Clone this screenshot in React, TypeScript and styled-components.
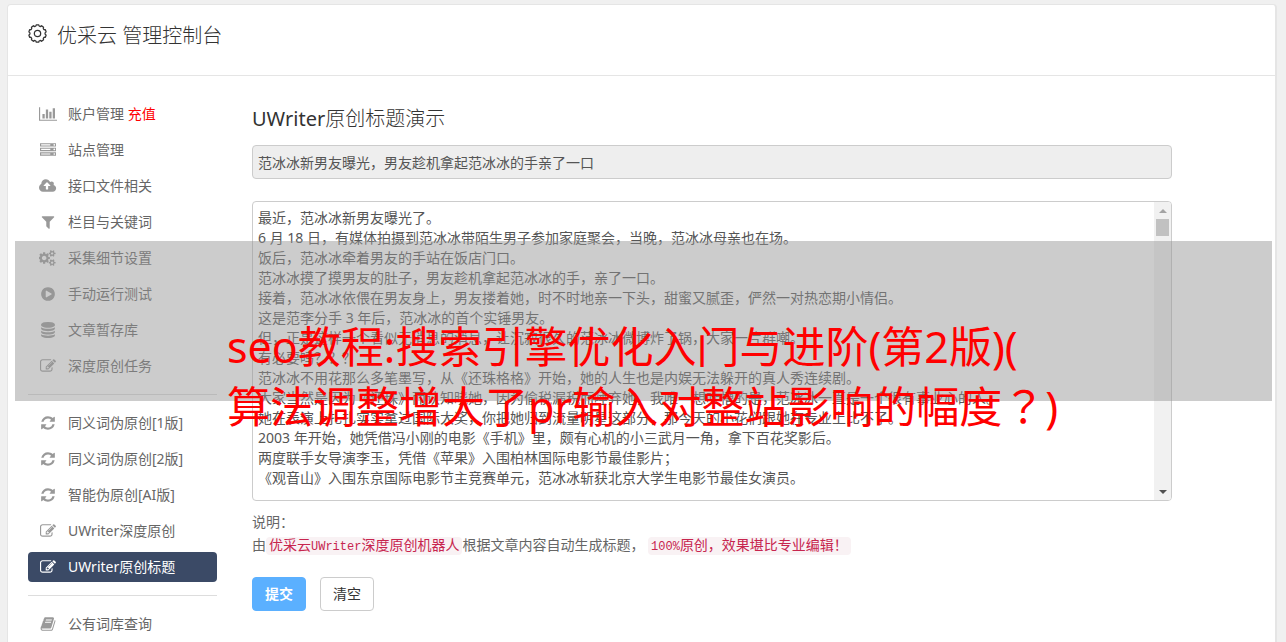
import React from 'react';
import styled, { createGlobalStyle, css } from 'styled-components';

const GlobalStyle = createGlobalStyle`
  *, *::before, *::after { box-sizing: border-box; }
  html { background: #f0f0f0; }
  body {
    margin: 0;
    color: #555;
    font-family: "Noto Sans", "Noto Sans CJK SC", sans-serif;
    font-size: 14px;
    line-height: 20px;
  }
  button, input, textarea { font: inherit; }
  #root { display: flow-root; height: 100vh; overflow: hidden; }
`;

const Panel = styled.div`
  min-height: calc(100vh - 4px);
  margin: 4px 9px 0 7px;
  background: #fff;
  border: 1px solid #e5e5e5;
  border-right-width: 2px;
  border-bottom: 0;
  border-radius: 4px 4px 0 0;
`;

const Header = styled.header`
  display: flex;
  align-items: flex-start;
  gap: 10px;
  height: 71px;
  padding: 19px 20px 0;
  border-bottom: 1px solid #e5e5e5;
  color: #333;
`;

const PageTitle = styled.h1`
  margin: 0;
  font-size: 20px;
  line-height: 24px;
  font-weight: 300;
`;

const Columns = styled.div`
  display: flex;
  gap: 35px;
  padding: 23px 20px 0;
`;

const Sidebar = styled.nav`
  display: flex;
  flex: 0 0 189px;
  flex-direction: column;
  gap: 6px;
`;

const MenuLink = styled.a<{ $active?: boolean }>`
  display: flex;
  align-items: center;
  gap: 10px;
  height: 30px;
  padding: 0 10px;
  border-radius: 4px;
  color: #666;
  text-decoration: none;
  white-space: nowrap;
  svg { color: #999; }
  ${({ $active }) => $active && css`
    background: #3b4a66;
    color: #fff;
    svg { color: #fff; }
  `}
`;

const IconSlot = styled.span`
  display: flex;
  justify-content: center;
  width: 20px;
`;

const Recharge = styled.span`
  color: #f00;
`;

const Divider = styled.hr`
  width: 100%;
  height: 1px;
  margin: 7px 0;
  border: 0;
  background: #ddd;
`;

const Form = styled.form`
  display: flex;
  flex: 0 1 920px;
  flex-direction: column;
  min-width: 0;
`;

const FormTitle = styled.h2`
  margin: 6px 0 12px;
  color: #333;
  font-size: 20px;
  line-height: 28px;
  font-weight: 300;
`;

const TitleLatin = styled.span`
  font-weight: 400;
`;

const TitleInput = styled.input`
  width: 100%;
  height: 34px;
  padding: 6px 5px;
  background: #eee;
  border: 1px solid #ccc;
  border-radius: 4px;
  color: #555;
  outline: 0;
`;

const ArticleFrame = styled.div`
  display: flex;
  height: 300px;
  margin: 22px 0 9px;
  overflow: hidden;
  border: 1px solid #ccc;
  border-radius: 4px;
`;

const ArticleText = styled.textarea`
  flex: 1;
  min-width: 0;
  padding: 6px 5px;
  overflow: hidden;
  background: transparent;
  border: 0;
  color: #555;
  outline: 0;
  resize: none;
`;

const ScrollTrack = styled.div`
  display: flex;
  flex: 0 0 17px;
  flex-direction: column;
  align-items: center;
  background: #f1f1f1;
`;

const ScrollArrow = styled.span<{ $down?: boolean }>`
  display: grid;
  place-items: center;
  width: 17px;
  height: 17px;
  margin-top: ${({ $down }) => ($down ? 'auto' : '0')};
  &::before {
    content: "";
    border: 4px solid transparent;
    border-top: ${({ $down }) => ($down ? '4px solid #505050' : '0')};
    border-bottom: ${({ $down }) => ($down ? '0' : '4px solid #a3a3a3')};
  }
`;

const ScrollThumb = styled.span`
  width: 13px;
  height: 17px;
  background: #c1c1c1;
`;

const Note = styled.p`
  margin: 0;
  line-height: 23px;
  color: #666;
`;

const Code = styled.code`
  padding: 1px 3px;
  background: #f9f2f4;
  border-radius: 4px;
  color: #c7254e;
  font-family: "Liberation Mono", "Noto Sans CJK SC", monospace;
  font-size: 14px;
`;

const CodeLatin = styled.span`
  font-size: 12px;
`;

const Actions = styled.div`
  display: flex;
  gap: 14px;
  margin-top: 18px;
`;

const Button = styled.button<{ $primary?: boolean }>`
  width: 54px;
  height: 34px;
  padding: 0;
  background: ${({ $primary }) => ($primary ? '#5bb0ff' : '#fff')};
  border: 1px solid ${({ $primary }) => ($primary ? '#5bb0ff' : '#ccc')};
  border-radius: 4px;
  color: ${({ $primary }) => ($primary ? '#fff' : '#333')};
  font-weight: ${({ $primary }) => ($primary ? 700 : 400)};
`;

const Banner = styled.div`
  position: absolute;
  top: 241px;
  left: 15px;
  right: 14px;
  height: 160px;
  padding: 76px 0 0 212px;
  background: rgba(149, 149, 149, 0.48);
  color: #f00;
  font-size: 43px;
  line-height: 60px;
  white-space: nowrap;
  pointer-events: none;
`;

const CenteredMark = styled.span`
  font-family: "Noto Sans CJK TC", sans-serif;
  line-height: 1;
`;

const icons = {
  chart: [2048, 'M640 896v512h-256v-512h256zm384-512v1024h-256v-1024h256zm1024 1152v128h-2048v-1536h128v1408h1920zm-640-896v768h-256v-768h256zm384-384v1152h-256v-1152h256z'],
  server: [1792, 'M128 1408h1024v-128h-1024v128zm0-512h1024v-128h-1024v128zm1568 448q0-40-28-68t-68-28-68 28-28 68 28 68 68 28 68-28 28-68zm-1568-960h1024v-128h-1024v128zm1568 448q0-40-28-68t-68-28-68 28-28 68 28 68 68 28 68-28 28-68zm0-512q0-40-28-68t-68-28-68 28-28 68 28 68 68 28 68-28 28-68zm96 832v384h-1792v-384h1792zm0-512v384h-1792v-384h1792zm0-512v384h-1792v-384h1792z'],
  upload: [1920, 'M1280 864q0-14-9-23l-352-352q-9-9-23-9t-23 9l-351 351q-10 12-10 24 0 14 9 23t23 9h224v352q0 13 9.5 22.5t22.5 9.5h192q13 0 22.5-9.5t9.5-22.5v-352h224q13 0 22.5-9.5t9.5-22.5zm640 288q0 159-112.5 271.5t-271.5 112.5h-1088q-185 0-316.5-131.5t-131.5-316.5q0-130 70-240t188-165q-2-30-2-43 0-212 150-362t362-150q156 0 285.5 87t188.5 231q71-62 166-62 106 0 181 75t75 181q0 76-41 138 130 31 213.5 135.5t83.5 238.5z'],
  filter: [1792, 'M1595 295q17 41-14 70l-493 493v742q0 42-39 59-13 5-25 5-27 0-45-19l-256-256q-19-19-19-45v-486l-493-493q-31-29-14-70 17-39 59-39h1280q42 0 59 39z'],
  cogs: [1920, 'M832 896q0-106-75-181t-181-75-181 75-75 181 75 181 181 75 181-75 75-181zm768 512q0-52-38-90t-90-38-90 38-38 90q0 53 37.5 90.5t90.5 37.5 90.5-37.5 37.5-90.5zm0-1024q0-52-38-90t-90-38-90 38-38 90q0 53 37.5 90.5t90.5 37.5 90.5-37.5 37.5-90.5zm-384 421v185q0 10-7 19.5t-16 10.5l-155 24q-11 35-32 76 34 48 90 115 7 11 7 20 0 12-7 19-23 30-82.5 89.5t-78.5 59.5q-11 0-21-7l-115-90q-37 19-77 31-11 108-23 155-7 24-30 24h-186q-11 0-20-7.5t-10-17.5l-23-153q-34-10-75-31l-118 89q-7 7-20 7-11 0-21-8-144-133-144-160 0-9 7-19 10-14 41-53t47-61q-23-44-35-82l-152-24q-10-1-17-9.5t-7-19.5v-185q0-10 7-19.5t16-10.5l155-24q11-35 32-76-34-48-90-115-7-11-7-20 0-12 7-20 22-30 82-89t79-59q11 0 21 7l115 90q34-18 77-32 11-108 23-154 7-24 30-24h186q11 0 20 7.5t10 17.5l23 153q34 10 75 31l118-89q8-7 20-7 11 0 21 8 144 133 144 160 0 8-7 19-12 16-42 54t-45 60q23 48 34 82l152 23q10 2 17 10.5t7 19.5zm640 533v140q0 16-149 31-12 27-30 52 51 113 51 138 0 4-4 7-122 71-124 71-8 0-46-47t-52-68q-20 2-30 2t-30-2q-14 21-52 68t-46 47q-2 0-124-71-4-3-4-7 0-25 51-138-18-25-30-52-149-15-149-31v-140q0-16 149-31 13-29 30-52-51-113-51-138 0-4 4-7 4-2 35-20t59-34 30-16q8 0 46 46.5t52 67.5q20-2 30-2t30 2q51-71 92-112l6-2q4 0 124 70 4 3 4 7 0 25-51 138 17 23 30 52 149 15 149 31zm0-1024v140q0 16-149 31-12 27-30 52 51 113 51 138 0 4-4 7-122 71-124 71-8 0-46-47t-52-68q-20 2-30 2t-30-2q-14 21-52 68t-46 47q-2 0-124-71-4-3-4-7 0-25 51-138-18-25-30-52-149-15-149-31v-140q0-16 149-31 13-29 30-52-51-113-51-138 0-4 4-7 4-2 35-20t59-34 30-16q8 0 46 46.5t52 67.5q20-2 30-2t30 2q51-71 92-112l6-2q4 0 124 70 4 3 4 7 0 25-51 138 17 23 30 52 149 15 149 31z'],
  play: [1792, 'M896 128q209 0 385.5 103t279.5 279.5 103 385.5-103 385.5-279.5 279.5-385.5 103-385.5-103-279.5-279.5-103-385.5 103-385.5 279.5-279.5 385.5-103zm384 823q32-18 32-55t-32-55l-544-320q-31-19-64-1-32 19-32 56v640q0 37 32 56 16 8 32 8 17 0 32-9z'],
  database: [1792, 'M896 768q237 0 443-43t325-127v170q0 69-103 128t-280 93.5-385 34.5-385-34.5-280-93.5-103-128v-170q119 84 325 127t443 43zm0 768q237 0 443-43t325-127v170q0 69-103 128t-280 93.5-385 34.5-385-34.5-280-93.5-103-128v-170q119 84 325 127t443 43zm0-384q237 0 443-43t325-127v170q0 69-103 128t-280 93.5-385 34.5-385-34.5-280-93.5-103-128v-170q119 84 325 127t443 43zm0-1152q208 0 385 34.5t280 93.5 103 128v128q0 69-103 128t-280 93.5-385 34.5-385-34.5-280-93.5-103-128v-128q0-69 103-128t280-93.5 385-34.5z'],
  edit: [1792, 'M888 1184l116-116-152-152-116 116v56h96v96h56zm440-720q-16-16-33 1l-350 350q-17 17-1 33t33-1l350-350q17-17 1-33zm80 594v190q0 119-84.5 203.5t-203.5 84.5h-832q-119 0-203.5-84.5t-84.5-203.5v-832q0-119 84.5-203.5t203.5-84.5h832q63 0 117 25 15 7 18 23 3 17-9 29l-49 49q-14 14-32 8-23-6-45-6h-832q-66 0-113 47t-47 113v832q0 66 47 113t113 47h832q66 0 113-47t47-113v-126q0-13 9-22l64-64q15-15 35-7t20 29zm-96-738l288 288-672 672h-288v-288zm444 132l-92 92-288-288 92-92q28-28 68-28t68 28l152 152q28 28 28 68t-28 68z'],
  refresh: [1792, 'M1639 1056q0 5-1 7-64 268-268 434.5t-478 166.5q-146 0-282.5-55t-243.5-157l-129 129q-19 19-45 19t-45-19-19-45v-448q0-26 19-45t45-19h448q26 0 45 19t19 45-19 45l-137 137q71 66 161 102t187 36q134 0 250-65t186-179q11-17 53-117 8-23 30-23h192q13 0 22.5 9.5t9.5 22.5zm25-800v448q0 26-19 45t-45 19h-448q-26 0-45-19t-19-45 19-45l138-138q-148-137-349-137-134 0-250 65t-186 179q-11 17-53 117-8 23-30 23h-199q-13 0-22.5-9.5t-9.5-22.5v-7q65-268 270-434.5t480-166.5q146 0 284 55.5t245 156.5l130-129q19-19 45-19t45 19 19 45z'],
  book: [1792, 'M1703 478q40 57 18 129l-275 906q-19 64-76.5 107.5t-122.5 43.5h-923q-77 0-148.5-53.5t-99.5-131.5q-24-67-2-127 0-4 3-27t4-37q1-8-3-21.5t-3-19.5q2-11 8-21t16.5-23.5 16.5-23.5q23-38 45-91.5t30-91.5q3-10 .5-30t-.5-28q3-11 17-28t17-23q21-36 42-92t25-90q1-9-2.5-32t.5-28q4-13 22-30.5t22-22.5q19-26 42.5-84.5t27.5-96.5q1-8-3-25.5t-2-26.5q2-8 9-18t18-23 17-21q8-12 16.5-30.5t15-35 16-36 19.5-32 26.5-23.5 36-11.5 47.5 5.5l-1 3q38-9 51-9h761q74 0 114 56t18 130l-274 906q-36 119-71.5 153.5t-128.5 34.5h-869q-27 0-38 15-11 16-1 43 24 70 144 70h923q29 0 56-15.5t35-41.5l300-987q7-22 5-57 38 15 59 43zm-1064 2q-4 13 2 22.5t20 9.5h608q13 0 25.5-9.5t16.5-22.5l21-64q4-13-2-22.5t-20-9.5h-608q-13 0-25.5 9.5t-16.5 22.5zm-83 256q-4 13 2 22.5t20 9.5h608q13 0 25.5-9.5t16.5-22.5l21-64q4-13-2-22.5t-20-9.5h-608q-13 0-25.5 9.5t-16.5 22.5z'],
} as const;

type IconName = keyof typeof icons;

function Icon({ name }: { name: IconName }) {
  const [width, path] = icons[name];
  return (
    <svg width={(width * 16) / 1792} height="16" viewBox={`0 0 ${width} 1792`} fill="currentColor" aria-hidden="true">
      <path d={path} />
    </svg>
  );
}

/* Gear outline with ten rounded teeth around a ring. */
const gearPath = (() => {
  const point = (radius: number, degrees: number) => {
    const a = (degrees * Math.PI) / 180;
    return `${(9 + radius * Math.sin(a)).toFixed(2)} ${(9 - radius * Math.cos(a)).toFixed(2)}`;
  };
  let d = `M${point(7.1, -18)}`;
  for (let i = 0; i < 10; i += 1) {
    const a = i * 36;
    d += `Q${point(7.1, a - 10)} ${point(8.3, a - 8)}L${point(8.3, a + 8)}Q${point(7.1, a + 10)} ${point(7.1, a + 18)}`;
  }
  return `${d}Z`;
})();

function GearIcon() {
  return (
    <svg width="19" height="19" viewBox="0 0 18 18" fill="none" stroke="currentColor" strokeWidth="1.2" strokeLinejoin="round" aria-hidden="true">
      <path d={gearPath} />
      <circle cx="9" cy="9" r="3" />
    </svg>
  );
}

type Item = { icon: IconName; label: string; extra?: string; active?: boolean };

const groups: Item[][] = [
  [
    { icon: 'chart', label: '账户管理', extra: '充值' },
    { icon: 'server', label: '站点管理' },
    { icon: 'upload', label: '接口文件相关' },
    { icon: 'filter', label: '栏目与关键词' },
    { icon: 'cogs', label: '采集细节设置' },
    { icon: 'play', label: '手动运行测试' },
    { icon: 'database', label: '文章暂存库' },
    { icon: 'edit', label: '深度原创任务' },
  ],
  [
    { icon: 'refresh', label: '同义词伪原创[1版]' },
    { icon: 'refresh', label: '同义词伪原创[2版]' },
    { icon: 'refresh', label: '智能伪原创[AI版]' },
    { icon: 'edit', label: 'UWriter深度原创' },
    { icon: 'edit', label: 'UWriter原创标题', active: true },
  ],
  [{ icon: 'book', label: '公有词库查询' }],
];

const article = [
  '最近，范冰冰新男友曝光了。',
  '6 月 18 日，有媒体拍摄到范冰冰带陌生男子参加家庭聚会，当晚，范冰冰母亲也在场。',
  '饭后，范冰冰牵着男友的手站在饭店门口。',
  '范冰冰摸了摸男友的肚子，男友趁机拿起范冰冰的手，亲了一口。',
  '接着，范冰冰依偎在男友身上，男友搂着她，时不时地亲一下头，甜蜜又腻歪，俨然一对热恋期小情侣。',
  '这是范李分手 3 年后，范冰冰的首个实锤男友。',
  '但，正是这样一个看似无消息的消息，让沉寂很久的范冰冰微博炸了锅，大家一片群嘲。',
  '有必要吗？？？',
  '范冰冰不用花那么多笔墨写，从《还珠格格》开始，她的人生也是内娱无法躲开的真人秀连续剧。',
  '大家当然是因为《还珠》而认知晓她，因为偷税漏税而唾弃她，我唯一想吐槽的是，范冰冰一直是一个很有事业心的人。',
  '她在表演上扎扎实实拿过国际大奖，你把她归到流量明星这部分，那今天的小花们跟她在专业上比不了。',
  '2003 年开始，她凭借冯小刚的电影《手机》里，颇有心机的小三武月一角，拿下百花奖影后。',
  '两度联手女导演李玉，凭借《苹果》入围柏林国际电影节最佳影片；',
  '《观音山》入围东京国际电影节主竞赛单元，范冰冰斩获北京大学生电影节最佳女演员。',
].join('\n');

export default function App() {
  return (
    <>
      <GlobalStyle />
      <Panel>
        <Header>
          <GearIcon />
          <PageTitle>优采云 管理控制台</PageTitle>
        </Header>
        <Columns>
          <Sidebar aria-label="管理菜单">
            {groups.map((items, index) => (
              <React.Fragment key={index}>
                {index > 0 && <Divider />}
                {items.map(({ icon, label, extra, active }) => (
                  <MenuLink key={label} href="#" $active={active} aria-current={active ? 'page' : undefined}>
                    <IconSlot><Icon name={icon} /></IconSlot>
                    <span>{label}{extra && <Recharge> {extra}</Recharge>}</span>
                  </MenuLink>
                ))}
              </React.Fragment>
            ))}
          </Sidebar>
          <Form onSubmit={(event) => event.preventDefault()}>
            <FormTitle><TitleLatin>UWriter</TitleLatin>原创标题演示</FormTitle>
            <TitleInput aria-label="标题" readOnly defaultValue="范冰冰新男友曝光，男友趁机拿起范冰冰的手亲了一口" />
            <ArticleFrame>
              <ArticleText aria-label="文章内容" spellCheck={false} defaultValue={article} />
              <ScrollTrack aria-hidden="true">
                <ScrollArrow />
                <ScrollThumb />
                <ScrollArrow $down />
              </ScrollTrack>
            </ArticleFrame>
            <Note>说明：</Note>
            <Note>
              由<Code>优采云<CodeLatin>UWriter</CodeLatin>深度原创机器人</Code>根据文章内容自动生成标题，
              {' '}
              <Code><CodeLatin>100%</CodeLatin>原创，效果堪比专业编辑！</Code>
            </Note>
            <Actions>
              <Button type="submit" $primary>提交</Button>
              <Button type="reset">清空</Button>
            </Actions>
          </Form>
        </Columns>
      </Panel>
      <Banner>
        seo教程:搜索引擎优化入门与进阶(第2版)(
        <br />
        算法调整增大了pr输入对整站影响的幅度<CenteredMark>？</CenteredMark>)
      </Banner>
    </>
  );
}
